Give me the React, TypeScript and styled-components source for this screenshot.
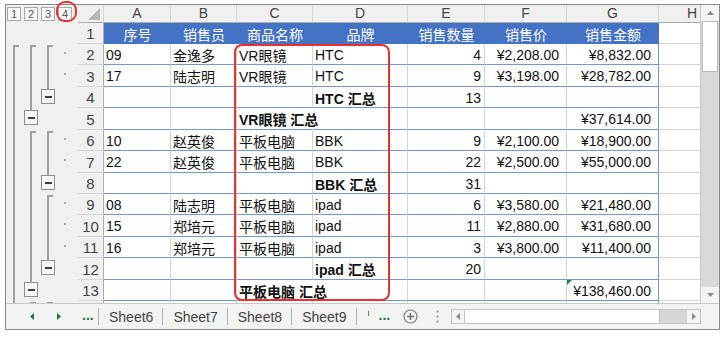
import React from 'react';
import styled, { createGlobalStyle, css } from 'styled-components';

const GlobalStyle = createGlobalStyle`
  html, body { margin: 0; padding: 0; background: #ffffff; }
  body { font-family: "Liberation Sans", "Noto Sans CJK SC", Arial, sans-serif; }
  *, *::before, *::after { box-sizing: border-box; }
`;

const HEAD_BG = '#f0f0f0';
const GRID = '#d4d4d4';
const HEAD_LINE = '#ababab';
const BLUE = '#4472c4';
const TABLE_LINE = '#7396d4';
const OUTLINE = '#a0a0a0';
const RED = '#e8322f';

const Page = styled.div`
  position: relative;
  width: 728px;
  height: 338px;
  padding: 4px 0 0 5px;
`;

const Frame = styled.div`
  width: 715px;
  height: 326px;
  border: 1px solid #8a8a8a;
  display: flex;
  flex-direction: column;
  background: #fff;
  overflow: hidden;
`;

const Main = styled.div`
  display: flex;
  height: 298px;
`;

const Sheet = styled.div`
  display: grid;
  grid-template-columns: 72px 26px 67px 66px 76px 95px 77px 82px 92px 41px;
  grid-template-rows: 18px 21px 21px 22px 21px 22px 21px 22px 21px 21px 22px 21px 22px 21px 2px;
  width: 694px;
  overflow: hidden;
  background: #fff;
`;

/* ---------- outline gutter ---------- */
const HeaderGutter = styled.div`
  display: flex;
  align-items: flex-start;
  padding: 2px 0 0 1px;
  background: ${HEAD_BG};
`;

const LevelButton = styled.div`
  width: 14px;
  height: 14px;
  margin-right: 3px;
  border: 1px solid #a8a8a8;
  background: #f7f7f7;
  color: #5a5a5a;
  font-size: 11px;
  line-height: 12px;
  text-align: center;
`;

const Gutter = styled.div`
  display: flex;
  padding-left: 1px;
  background: ${HEAD_BG};
  overflow: hidden;
  min-height: 0;
`;

const Track = styled.div`
  width: 17px;
  flex-shrink: 0;
  display: flex;
  flex-direction: column;
  align-items: flex-start;
  overflow: hidden;
`;

const Bar = styled.div<{ $h?: number }>`
  width: 2px;
  margin-left: 6px;
  background: ${OUTLINE};
  ${p => (p.$h ? `height: ${p.$h}px; flex-shrink: 0;` : 'flex: 1;')}
`;

const Tick = styled.div`
  width: 6px;
  height: 2px;
  margin: 1px 0 0 6px;
  flex-shrink: 0;
  background: ${OUTLINE};
`;

const Toggle = styled.div`
  width: 14px;
  height: 15px;
  flex-shrink: 0;
  border: 1px solid #8e8e8e;
  background: #f6f6f6;
  display: flex;
  align-items: center;
  justify-content: center;
`;

const Minus = styled.div`
  width: 7px;
  height: 2px;
  background: #3c3c3c;
`;

const Dot = styled.div`
  width: 2px;
  height: 2px;
  margin: 8px 0 0 6px;
  background: #a8a8a8;
`;

type Seg = 'none' | 'start' | 'line' | 'button' | 'dot';

const OUTLINE_ROWS: Seg[][] = [
  ['none', 'none', 'none', 'none'],
  ['start', 'start', 'start', 'dot'],
  ['line', 'line', 'line', 'dot'],
  ['line', 'line', 'button', 'none'],
  ['line', 'button', 'none', 'none'],
  ['line', 'start', 'start', 'dot'],
  ['line', 'line', 'line', 'dot'],
  ['line', 'line', 'button', 'none'],
  ['line', 'line', 'start', 'dot'],
  ['line', 'line', 'line', 'dot'],
  ['line', 'line', 'line', 'dot'],
  ['line', 'line', 'button', 'none'],
  ['line', 'button', 'none', 'none'],
  ['line', 'start', 'start', 'none'],
];

const SegView = ({ kind }: { kind: Seg }) => {
  switch (kind) {
    case 'line':
      return <Bar />;
    case 'start':
      return (
        <>
          <Tick />
          <Bar />
        </>
      );
    case 'button':
      return (
        <>
          <Bar $h={2} />
          <Toggle>
            <Minus />
          </Toggle>
        </>
      );
    case 'dot':
      return <Dot />;
    default:
      return null;
  }
};

const OutlineRow = ({ spec }: { spec: Seg[] }) => (
  <Gutter>
    {spec.map((s, i) => (
      <Track key={i}>
        <SegView kind={s} />
      </Track>
    ))}
  </Gutter>
);

/* ---------- headers ---------- */
const Corner = styled.div`
  background: ${HEAD_BG};
  border-bottom: 1px solid ${HEAD_LINE};
  border-right: 1px solid ${GRID};
`;

const ColHeader = styled.div<{ $edge?: boolean }>`
  background: ${HEAD_BG};
  border-bottom: 1px solid ${HEAD_LINE};
  border-right: ${p => (p.$edge ? 'none' : `1px solid ${GRID}`)};
  color: #444;
  font-size: 14px;
  line-height: 17px;
  text-align: ${p => (p.$edge ? 'right' : 'center')};
  padding-right: ${p => (p.$edge ? '3px' : '0')};
`;

const RowHeader = styled.div<{ $bare?: boolean }>`
  background: ${HEAD_BG};
  border-bottom: ${p => (p.$bare ? 'none' : `1px solid ${GRID}`)};
  border-right: 1px solid ${HEAD_LINE};
  color: #444;
  font-size: 15px;
  display: flex;
  align-items: center;
  justify-content: center;
  padding-top: 1px;
`;

/* ---------- cells ---------- */
const TitleCell = styled.div`
  background: ${BLUE};
  color: #fff;
  font-size: 14px;
  display: flex;
  align-items: center;
  justify-content: center;
  white-space: nowrap;
`;

const DataCell = styled.div<{ $col: number; $bold?: boolean; $spill?: boolean; $flag?: boolean; $bare?: boolean }>`
  position: relative;
  min-width: 0;
  display: flex;
  align-items: center;
  justify-content: ${p => (p.$col >= 4 ? 'flex-end' : 'flex-start')};
  padding: 1px ${p => (p.$col >= 5 ? 7 : 3)}px 0 2px;
  white-space: nowrap;
  font-size: 14px;
  color: #111;
  font-weight: ${p => (p.$bold ? 700 : 400)};
  border-bottom: ${p => (p.$bare ? 'none' : `1px solid ${TABLE_LINE}`)};
  border-right: 1px solid
    ${p => (p.$col === 6 ? TABLE_LINE : p.$spill ? 'transparent' : GRID)};
  ${p =>
    p.$flag &&
    css`
      &::before {
        content: '';
        position: absolute;
        left: 0;
        top: 0;
        border-top: 5px solid #1f8a3c;
        border-right: 5px solid transparent;
      }
    `}
`;

const BlankCell = styled.div<{ $bare?: boolean }>`
  border-bottom: ${p => (p.$bare ? 'none' : `1px solid ${GRID}`)};
`;

/* ---------- vertical scrollbar ---------- */
const VScroll = styled.div`
  width: 19px;
  border-left: 1px solid #c8c8c8;
  background: #d9d9d9;
  display: flex;
  flex-direction: column;
`;

const VBtn = styled.div`
  height: 16px;
  background: #f4f4f4;
  display: flex;
  align-items: center;
  justify-content: center;
`;

const VThumb = styled.div`
  height: 51px;
  margin: 0 1px;
  background: #fff;
  border: 1px solid #b9b9b9;
`;

const Fill = styled.div`
  flex: 1;
`;

/* ---------- tab bar ---------- */
const TabBar = styled.div`
  height: 26px;
  border-top: 1px solid #c8c8c8;
  background: #f3f3f3;
  display: flex;
  align-items: center;
  color: #444;
  font-size: 14px;
`;

const Nav = styled.div`
  width: 92px;
  display: flex;
  align-items: center;
  padding-left: 24px;
`;

const NavGap = styled.div<{ $w: number }>`
  width: ${p => p.$w}px;
  flex-shrink: 0;
`;

const GreenDots = styled.span`
  color: #217346;
  font-weight: 700;
  font-size: 14px;
  line-height: 14px;
  margin-top: -4px;
`;

const Sep = styled.div`
  width: 1px;
  height: 17px;
  background: #b4b4b4;
  flex-shrink: 0;
`;

const Tab = styled.div`
  padding: 0 9px 0 10px;
  white-space: nowrap;
  line-height: 18px;
`;

const TabSliver = styled.div`
  width: 2px;
  height: 5px;
  margin: 0 0 7px 11px;
  border-left: 1.5px solid #777;
  flex-shrink: 0;
`;

const IconBox = styled.div<{ $ml: number }>`
  margin-left: ${p => p.$ml}px;
  display: flex;
  align-items: center;
`;

const HScroll = styled.div`
  margin-left: auto;
  width: 250px;
  height: 15px;
  display: flex;
  background: #d6d6d6;
  border: 1px solid #c4c4c4;
`;

const HBtn = styled.div<{ $w: number }>`
  width: ${p => p.$w}px;
  background: #f4f4f4;
  display: flex;
  align-items: center;
  justify-content: center;
  flex-shrink: 0;
`;

const HThumb = styled.div`
  width: 196px;
  background: #fff;
  border-left: 1px solid #c4c4c4;
  border-right: 1px solid #c4c4c4;
`;

const EndFill = styled.div`
  width: 18px;
  flex-shrink: 0;
`;

/* ---------- annotations ---------- */
const RedRect = styled.div`
  position: absolute;
  left: 234px;
  top: 44px;
  width: 156px;
  height: 257px;
  border: 2px solid ${RED};
  border-radius: 8px;
  pointer-events: none;
`;

const RedCircle = styled.div`
  position: absolute;
  left: 56px;
  top: 1px;
  width: 21px;
  height: 21px;
  border: 2px solid ${RED};
  border-radius: 9px;
  pointer-events: none;
`;

/* ---------- data ---------- */
const COLS = ['A', 'B', 'C', 'D', 'E', 'F', 'G', 'H'];
const TITLES = ['序号', '销售员', '商品名称', '品牌', '销售数量', '销售价', '销售金额'];
const DATA: string[][] = [
  ['09', '金逸多', 'VR眼镜', 'HTC', '4', '¥2,208.00', '¥8,832.00'],
  ['17', '陆志明', 'VR眼镜', 'HTC', '9', '¥3,198.00', '¥28,782.00'],
  ['', '', '', 'HTC 汇总', '13', '', ''],
  ['', '', 'VR眼镜 汇总', '', '', '', '¥37,614.00'],
  ['10', '赵英俊', '平板电脑', 'BBK', '9', '¥2,100.00', '¥18,900.00'],
  ['22', '赵英俊', '平板电脑', 'BBK', '22', '¥2,500.00', '¥55,000.00'],
  ['', '', '', 'BBK 汇总', '31', '', ''],
  ['08', '陆志明', '平板电脑', 'ipad', '6', '¥3,580.00', '¥21,480.00'],
  ['15', '郑培元', '平板电脑', 'ipad', '11', '¥2,880.00', '¥31,680.00'],
  ['16', '郑培元', '平板电脑', 'ipad', '3', '¥3,800.00', '¥11,400.00'],
  ['', '', '', 'ipad 汇总', '20', '', ''],
  ['', '', '平板电脑 汇总', '', '', '', '¥138,460.00'],
];
const SUBTOTAL = new Set([2, 3, 6, 10, 11]);
const SPILL = new Set([3, 11]);

const Arrow = ({ dir, color, w, h }: { dir: 'up' | 'down' | 'left' | 'right'; color: string; w: number; h: number }) => {
  const pts =
    dir === 'up'
      ? `0,${h} ${w},${h} ${w / 2},0`
      : dir === 'down'
      ? `0,0 ${w},0 ${w / 2},${h}`
      : dir === 'left'
      ? `${w},0 ${w},${h} 0,${h / 2}`
      : `0,0 0,${h} ${w},${h / 2}`;
  return (
    <svg width={w} height={h} viewBox={`0 0 ${w} ${h}`}>
      <polygon points={pts} fill={color} />
    </svg>
  );
};

export default function App() {
  return (
    <>
      <GlobalStyle />
      <Page>
        <Frame>
          <Main>
            <Sheet>
              <HeaderGutter>
                {[1, 2, 3, 4].map(n => (
                  <LevelButton key={n}>{n}</LevelButton>
                ))}
              </HeaderGutter>
              <Corner>
                <svg width="25" height="17" viewBox="0 0 25 17">
                  <polygon points="22,3 22,15 10,15" fill="#b6b6b6" />
                </svg>
              </Corner>
              {COLS.map((c, i) => (
                <ColHeader key={c} $edge={i === 7}>
                  {c}
                </ColHeader>
              ))}

              <OutlineRow spec={OUTLINE_ROWS[0]} />
              <RowHeader>1</RowHeader>
              {TITLES.map(t => (
                <TitleCell key={t}>{t}</TitleCell>
              ))}
              <BlankCell />

              {DATA.map((r, ri) => (
                <React.Fragment key={ri}>
                  <OutlineRow spec={OUTLINE_ROWS[ri + 1]} />
                  <RowHeader>{ri + 2}</RowHeader>
                  {r.map((v, ci) => (
                    <DataCell
                      key={ci}
                      $col={ci}
                      $bold={SUBTOTAL.has(ri) && (ci === 2 || ci === 3)}
                      $spill={SPILL.has(ri) && ci === 2}
                      $flag={ri === 11 && ci === 6}
                    >
                      {v}
                    </DataCell>
                  ))}
                  <BlankCell />
                </React.Fragment>
              ))}

              <OutlineRow spec={OUTLINE_ROWS[13]} />
              <RowHeader $bare />
              {Array.from({ length: 7 }).map((_, i) => (
                <DataCell key={i} $col={i} $bare />
              ))}
              <BlankCell $bare />
            </Sheet>
            <VScroll>
              <VBtn>
                <Arrow dir="up" color="#8a8a8a" w={7} h={4} />
              </VBtn>
              <VThumb />
              <Fill />
              <VBtn>
                <Arrow dir="down" color="#8a8a8a" w={7} h={4} />
              </VBtn>
            </VScroll>
          </Main>
          <TabBar>
            <Nav>
              <Arrow dir="left" color="#217346" w={4} h={7} />
              <NavGap $w={23} />
              <Arrow dir="right" color="#217346" w={4} h={7} />
              <NavGap $w={21} />
              <GreenDots>...</GreenDots>
            </Nav>
            <Sep />
            <Tab>Sheet6</Tab>
            <Sep />
            <Tab>Sheet7</Tab>
            <Sep />
            <Tab>Sheet8</Tab>
            <Sep />
            <Tab>Sheet9</Tab>
            <Sep />
            <TabSliver />
            <IconBox $ml={9}>
              <GreenDots>...</GreenDots>
            </IconBox>
            <IconBox $ml={13}>
              <svg width="15" height="15" viewBox="0 0 15 15">
                <circle cx="7.5" cy="7.5" r="6.5" fill="none" stroke="#7a7a7a" strokeWidth="1.2" />
                <line x1="4" y1="7.5" x2="11" y2="7.5" stroke="#6a6a6a" strokeWidth="1.4" />
                <line x1="7.5" y1="4" x2="7.5" y2="11" stroke="#6a6a6a" strokeWidth="1.4" />
              </svg>
            </IconBox>
            <IconBox $ml={18}>
              <svg width="3" height="13" viewBox="0 0 3 13">
                <rect x="0.5" y="0.5" width="2" height="2" fill="#9a9a9a" />
                <rect x="0.5" y="5.5" width="2" height="2" fill="#9a9a9a" />
                <rect x="0.5" y="10.5" width="2" height="2" fill="#9a9a9a" />
              </svg>
            </IconBox>
            <HScroll>
              <HBtn $w={12}>
                <Arrow dir="left" color="#8a8a8a" w={4} h={7} />
              </HBtn>
              <HThumb />
              <Fill />
              <HBtn $w={13}>
                <Arrow dir="right" color="#8a8a8a" w={4} h={7} />
              </HBtn>
            </HScroll>
            <EndFill />
          </TabBar>
        </Frame>
        <RedRect />
        <RedCircle />
      </Page>
    </>
  );
}
